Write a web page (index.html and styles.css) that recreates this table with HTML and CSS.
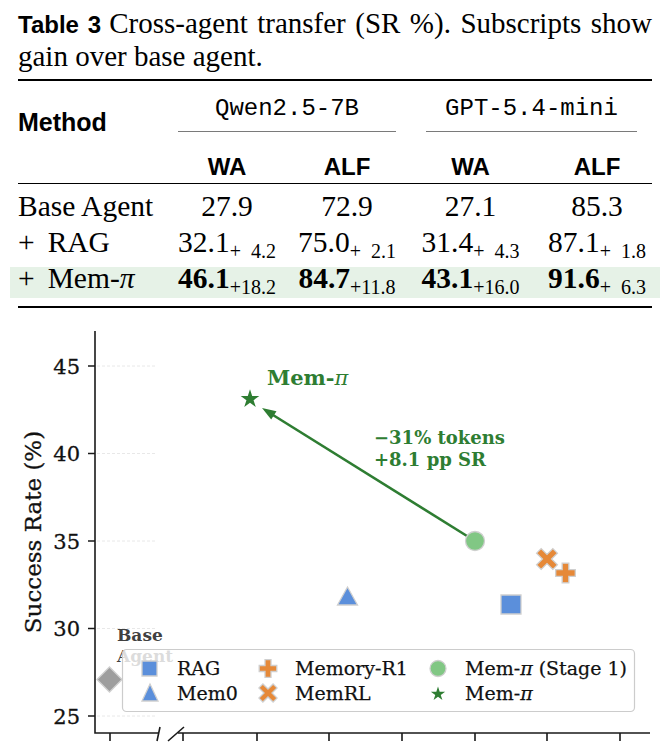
FILE: index.html
```html
<!DOCTYPE html>
<html>
<head>
<meta charset="utf-8">
<link rel="stylesheet" href="styles.css">
</head>
<body>
<div class="caption">
  <div class="cap-first"><span class="cap-label">Table 3</span>Cross-agent transfer (SR %). Subscripts show</div>
  <div class="cap-second">gain over base agent.</div>
</div>
<div class="table">
  <div class="rule rule-top"></div>
  <div class="thead">
    <div class="th-method">Method</div>
    <div class="group g1">Qwen2.5-7B</div>
    <div class="group g2">GPT-5.4-mini</div>
    <div class="sub s1">WA</div>
    <div class="sub s2">ALF</div>
    <div class="sub s3">WA</div>
    <div class="sub s4">ALF</div>
  </div>
  <div class="rule rule-mid"></div>
  <div class="tbody">
    <div class="row">
      <div class="m">Base Agent</div>
      <div class="c">27.9</div>
      <div class="c">72.9</div>
      <div class="c">27.1</div>
      <div class="c">85.3</div>
    </div>
    <div class="row">
      <div class="m"><span class="plus">+</span>RAG</div>
      <div class="c"><span>32.1</span><span class="gain">+<span class="ph">0</span>4.2</span></div>
      <div class="c"><span>75.0</span><span class="gain">+<span class="ph">0</span>2.1</span></div>
      <div class="c"><span>31.4</span><span class="gain">+<span class="ph">0</span>4.3</span></div>
      <div class="c"><span>87.1</span><span class="gain">+<span class="ph">0</span>1.8</span></div>
    </div>
    <div class="row hl">
      <div class="m"><span class="plus">+</span>Mem-<i>π</i></div>
      <div class="c"><b>46.1</b><span class="gain">+18.2</span></div>
      <div class="c"><b>84.7</b><span class="gain">+11.8</span></div>
      <div class="c"><b>43.1</b><span class="gain">+16.0</span></div>
      <div class="c"><b>91.6</b><span class="gain">+<span class="ph">0</span>6.3</span></div>
    </div>
  </div>
  <div class="rule rule-bottom"></div>
</div>
<svg class="chart" width="666" height="428" viewBox="0 318 666 428" xmlns="http://www.w3.org/2000/svg">
  <g class="grid">
    <line x1="97" y1="366" x2="157" y2="366"/>
    <line x1="97" y1="453.5" x2="157" y2="453.5"/>
    <line x1="97" y1="541" x2="157" y2="541"/>
    <line x1="97" y1="628.5" x2="157" y2="628.5"/>
    <line x1="97" y1="716" x2="157" y2="716"/>
  </g>
  <path class="axis" d="M95 331 V733 H159 M178 733 H650"/>
  <path class="axis" d="M88 366 H95 M88 453.5 H95 M88 541 H95 M88 628.5 H95 M88 716 H95 M110 733 V741 M183 733 V741 M257 733 V741 M329 733 V741 M402 733 V741 M475 733 V741 M547 733 V741 M620 733 V741"/>
  <path class="axis" d="M157 741 L160 727 M168 741 L184 727"/>
  <g class="ticklabel">
    <text x="80" y="373.5">45</text>
    <text x="80" y="461">40</text>
    <text x="80" y="548.5">35</text>
    <text x="80" y="636">30</text>
    <text x="80" y="723.5">25</text>
  </g>
  <text class="ylabel" transform="translate(41 532) rotate(-90)">Success Rate (%)</text>

  <!-- base agent -->
  <path class="mk gray" d="M109.5 667 L122 679.5 L109.5 692 L97 679.5 Z"/>
  <text class="base-note" x="117" y="641">Base</text>
  <text class="base-note" x="117" y="662">Agent</text>

  <!-- arrow -->
  <line class="arrow" x1="467" y1="536" x2="273" y2="415"/>
  <path class="arrowhead" d="M262 408 L276.5 411.2 L271.2 419.6 Z"/>

  <!-- data points -->
  <path class="mk blue" d="M347.5 587 L357.5 605 L337.5 605 Z"/>
  <rect class="mk blue" x="501" y="595" width="20" height="19"/>
  <circle class="mk lgreen" cx="475" cy="541" r="9.5"/>
  <path class="mk orange" transform="translate(547 559) rotate(45) scale(11.5)" d="M-0.28 -1 H0.28 V-0.28 H1 V0.28 H0.28 V1 H-0.28 V0.28 H-1 V-0.28 H-0.28 Z"/>
  <path class="mk orange" transform="translate(565.5 573) scale(9.8)" d="M-0.34 -1 H0.34 V-0.34 H1 V0.34 H0.34 V1 H-0.34 V0.34 H-1 V-0.34 H-0.34 Z"/>
  <path class="star" transform="translate(250 399) scale(9.8)" d="M0 -1 L0.2245 -0.309 L0.9511 -0.309 L0.3633 0.118 L0.5878 0.809 L0 0.382 L-0.5878 0.809 L-0.3633 0.118 L-0.9511 -0.309 L-0.2245 -0.309 Z"/>

  <text class="anno big" x="267" y="385">Mem-<tspan class="pi">π</tspan></text>
  <text class="anno" x="374" y="444">−31% tokens</text>
  <text class="anno" x="374" y="466">+8.1 pp SR</text>

  <!-- legend -->
  <rect class="legend" x="122.5" y="649.5" width="512" height="62" rx="4"/>
  <rect class="mk blue" x="142" y="661" width="15" height="15"/>
  <path class="mk blue" d="M150 684 L158 701 L142 701 Z"/>
  <path class="mk orange" transform="translate(268 668.5) scale(8.8)" d="M-0.34 -1 H0.34 V-0.34 H1 V0.34 H0.34 V1 H-0.34 V0.34 H-1 V-0.34 H-0.34 Z"/>
  <path class="mk orange" transform="translate(268 693) rotate(45) scale(10)" d="M-0.28 -1 H0.28 V-0.28 H1 V0.28 H0.28 V1 H-0.28 V0.28 H-1 V-0.28 H-0.28 Z"/>
  <circle class="mk lgreen" cx="438" cy="668.5" r="8"/>
  <path class="star" transform="translate(438 694) scale(7.5)" d="M0 -1 L0.2245 -0.309 L0.9511 -0.309 L0.3633 0.118 L0.5878 0.809 L0 0.382 L-0.5878 0.809 L-0.3633 0.118 L-0.9511 -0.309 L-0.2245 -0.309 Z"/>
  <g class="legtext">
    <text x="177" y="675">RAG</text>
    <text x="177" y="700">Mem0</text>
    <text x="295" y="675">Memory-R1</text>
    <text x="295" y="700">MemRL</text>
    <text x="465" y="675">Mem-<tspan class="pi">π</tspan> (Stage 1)</text>
    <text x="465" y="700">Mem-<tspan class="pi">π</tspan></text>
  </g>
</svg>
</body>
</html>
```
FILE: styles.css
```css
* { box-sizing: border-box; }
html, body { margin: 0; padding: 0; background: #fff; }
body {
  width: 666px;
  height: 746px;
  overflow: hidden;
  color: #000;
  font-family: "Liberation Serif", "Times New Roman", serif;
}

.caption {
  margin: 0 14px 0 18px;
  padding-top: 7px;
  font-size: 29px;
  line-height: 33px;
}
.cap-first {
  text-align: justify;
  text-align-last: justify;
}
.cap-label {
  font-family: "Liberation Sans", Arial, sans-serif;
  font-weight: bold;
  font-size: 24px;
  line-height: 1;
  margin-right: 8px;
}

.table {
  margin: 6px 14px 0 18px;
}
.rule { background: #000; }
.rule-top { height: 2px; }
.rule-mid { height: 1px; }
.rule-bottom { height: 2px; margin-top: 8px; }

.thead {
  display: grid;
  grid-template-columns: 141px 136px 104px 143px 110px;
  padding-top: 15.5px;
}
.th-method {
  grid-column: 1;
  grid-row: 1 / span 2;
  align-self: start;
  margin-top: 13.3px;
  font-family: "Liberation Sans", Arial, sans-serif;
  font-weight: bold;
  font-size: 25px;
  line-height: 25px;
}
.group {
  grid-row: 1;
  font-family: "Liberation Mono", "Courier New", monospace;
  font-size: 24px;
  line-height: 24px;
  text-align: center;
  padding-bottom: 10.5px;
  border-bottom: 1px solid #7a7a7a;
  white-space: nowrap;
}
.g1 { grid-column: 2 / span 2; margin: 0 3px 0 19px; }
.g2 { grid-column: 4 / span 2; margin: 0 15px 0 27px; }
.sub {
  grid-row: 2;
  font-family: "Liberation Sans", Arial, sans-serif;
  font-weight: bold;
  font-size: 24px;
  line-height: 24px;
  text-align: center;
  margin-top: 22.7px;
  padding-bottom: 4.3px;
}
.s1 { grid-column: 2; }
.s2 { grid-column: 3; }
.s3 { grid-column: 4; }
.s4 { grid-column: 5; }

.tbody {
  display: flex;
  flex-direction: column;
  gap: 5px;
  padding-top: 11px;
}
.row {
  display: grid;
  grid-template-columns: 141px 136px 104px 143px 110px;
  font-size: 29.5px;
  line-height: 22px;
  height: 31px;
  padding-bottom: 9px;
}
.row.hl {
  margin: 0 -8px;
  padding: 0 8px 9px;
  background: #e6f2e7;
}
.m { white-space: nowrap; }
.plus { margin-right: 13px; }
.c {
  display: flex;
  justify-content: center;
  align-items: baseline;
  white-space: nowrap;
}
.gain {
  font-size: 20px;
  position: relative;
  top: 6px;
  font-weight: normal;
}
.ph { visibility: hidden; }

.chart {
  display: block;
  margin-top: 10px;
  font-family: "DejaVu Serif", serif;
}
.grid line { stroke: #e8e8e8; stroke-width: 1; stroke-dasharray: 3 2; }
.axis { fill: none; stroke: #1a1a1a; stroke-width: 1.6; }
.ticklabel text { font-size: 21px; fill: #111; stroke: #111; stroke-width: 0.3px; text-anchor: end; }
.ylabel { font-size: 23px; fill: #111; stroke: #111; stroke-width: 0.3px; text-anchor: middle; }
.mk { stroke: #cfcfcf; stroke-width: 1.3; vector-effect: non-scaling-stroke; }
.gray { fill: #9e9e9e; }
.blue { fill: #5b8fdb; }
.orange { fill: #e68938; }
.lgreen { fill: #81c784; }
.star { fill: #2e7d32; }
.arrow { stroke: #2e7d32; stroke-width: 2.6; }
.arrowhead { fill: #2e7d32; }
.base-note { font-size: 17px; font-weight: bold; fill: #404040; }
.anno { font-size: 18px; font-weight: bold; fill: #2e7d32; }
.anno.big { font-size: 21px; }
.pi { font-style: italic; font-weight: normal; }
.legend { fill: #fff; fill-opacity: 0.82; stroke: #cccccc; stroke-width: 1.2; }
.legtext text { font-size: 19px; fill: #111; stroke: #111; stroke-width: 0.25px; }
```
